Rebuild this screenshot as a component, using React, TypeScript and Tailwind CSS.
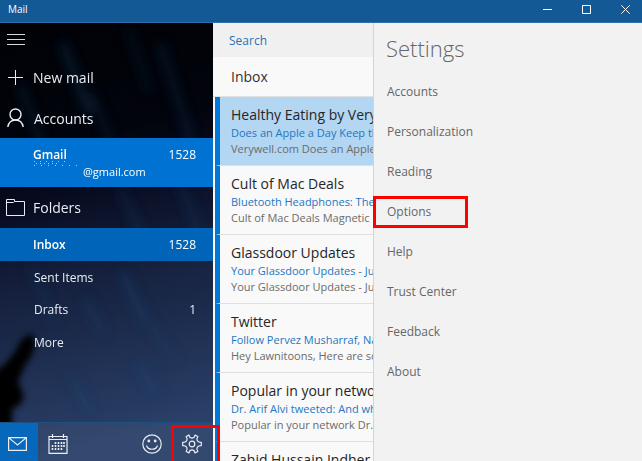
import React from "react";

const messages = [
  { from: "Healthy Eating by Very", subject: "Does an Apple a Day Keep th", preview: "Verywell.com Does an Apple", selected: true },
  { from: "Cult of Mac Deals", subject: "Bluetooth Headphones: The S", preview: "Cult of Mac Deals Magnetic E" },
  { from: "Glassdoor Updates", subject: "Your Glassdoor Updates - Jul", preview: "Your Glassdoor Updates - Jul" },
  { from: "Twitter", subject: "Follow Pervez Musharraf, Naja", preview: "Hey Lawnitoons, Here are som" },
  { from: "Popular in your netwo", subject: "Dr. Arif Alvi tweeted: And why", preview: "Popular in your network Dr. A" },
  { from: "Zahid Hussain Indher", subject: "", preview: "" },
];

const settings = ["Accounts", "Personalization", "Reading", "Options", "Help", "Trust Center", "Feedback", "About"];

const streaks = [
  [62, 20, 90, 90, 0.35], [20, 60, 44, 130, 0.2], [128, 5, 150, 70, 0.15], [160, 20, 192, 120, 0.25],
  [90, 70, 112, 120, 0.2], [120, 165, 150, 230, 0.2], [180, 160, 200, 210, 0.2],
  [122, 250, 146, 300, 0.35], [84, 275, 104, 310, 0.2], [150, 300, 175, 340, 0.15],
  [138, 340, 156, 370, 0.3], [70, 350, 90, 390, 0.15], [30, 240, 54, 300, 0.15],
];

function NightSky() {
  return (
    <svg className="absolute inset-0 h-full w-full" viewBox="0 0 213 438" preserveAspectRatio="none" aria-hidden="true">
      <defs>
        <linearGradient id="night" x1="0" y1="0" x2="0.12" y2="1">
          <stop offset="0" stopColor="#010206" />
          <stop offset="0.3" stopColor="#02040c" />
          <stop offset="0.42" stopColor="#070b1f" />
          <stop offset="0.58" stopColor="#131d39" />
          <stop offset="0.75" stopColor="#1c2b4c" />
          <stop offset="1" stopColor="#2a4068" />
        </linearGradient>
        <filter id="soft" x="-100%" y="-50%" width="300%" height="200%">
          <feGaussianBlur stdDeviation="6" />
        </filter>
        <filter id="edge" x="-50%" y="-50%" width="200%" height="200%">
          <feGaussianBlur stdDeviation="3" />
        </filter>
      </defs>
      <rect width="213" height="438" fill="url(#night)" />
      <g stroke="#234a7c" strokeWidth="8" filter="url(#soft)">
        {streaks.map(([x1, y1, x2, y2, o], i) => (
          <line key={i} x1={x1} y1={y1} x2={x2} y2={y2} opacity={o} />
        ))}
      </g>
      <path d="M-8 350 L4 342 L14 330 L22 316 L32 310 L35 320 L32 332 L25 342 L22 350 L18 358 L24 374 L20 382 L12 386 L12 404 L-8 410 Z" fill="#010205" filter="url(#edge)" />
    </svg>
  );
}

const line = { fill: "none", stroke: "#e9edf2", strokeWidth: 1.2 } as const;

function GearIcon() {
  return (
    <svg width="20" height="20" viewBox="0 0 20 20" {...line} strokeLinejoin="round" aria-hidden="true">
      <path d="M7 1 C7.300 3.400 8.200 4.200 10 4.200 S12.700 3.400 13 1 L15.800 2.600 C14.500 4.600 14.600 5.700 15.400 6.900 S17 8.500 19.300 8.400 V11.600 C17 11.500 16.200 11.900 15.400 13.100 S14.500 15.400 15.800 17.400 L13 19 C12.700 16.600 11.800 15.800 10 15.800 S7.300 16.600 7 19 L4.200 17.400 C5.500 15.400 5.400 14.300 4.600 13.100 S3 11.500 .7 11.600 V8.400 C3 8.500 3.800 8.100 4.600 6.900 S5.500 4.600 4.200 2.600 Z" />
      <circle cx="10" cy="10" r="2.800" />
    </svg>
  );
}

function CalendarIcon() {
  return (
    <svg width="20" height="20" viewBox="0 0 20 20" aria-hidden="true">
      <path d="M1 2.500 H19 V19.400 H1 Z M1 5.500 H19 M4.500 0 V4 M15.500 0 V4" {...line} />
      <g fill="#e9edf2">
        {[8, 11, 14].map((y) =>
          [4, 7, 10, 13, 15.5].map((x) =>
            (y === 8 && x === 4) || (y === 14 && x === 15.5) ? null : <rect key={`${x}-${y}`} x={x - 0.3} y={y} width="1.6" height="2" />
          )
        )}
      </g>
    </svg>
  );
}

export default function App() {
  return (
    <div className="flex h-screen flex-col overflow-hidden bg-[#f2f2f2] [font-family:'Open_Sans','Noto_Sans',sans-serif]">
      <header className="flex h-[23px] shrink-0 items-start justify-between border-b border-[#2f6ea8] bg-[#135995] pl-2 text-white">
        <h1 className="text-[10px] leading-[18px]">Mail</h1>
        <div className="flex h-[18px] gap-[5px]">
          <button aria-label="Minimize" className="flex w-[34px] items-center justify-center">
            <svg width="9" height="9" viewBox="0 0 9 9" stroke="#fff"><path d="M0 4.500 H9" /></svg>
          </button>
          <button aria-label="Maximize" className="flex w-[34px] items-center justify-center">
            <svg width="9" height="9" viewBox="0 0 9 9" stroke="#fff" fill="none"><path d="M.5 .5 H8.500 V8.500 H.5 Z" /></svg>
          </button>
          <button aria-label="Close" className="flex w-[34px] items-center justify-center">
            <svg width="9" height="9" viewBox="0 0 9 9" stroke="#fff"><path d="M.3 .3 L8.700 8.700 M8.700 .3 L.3 8.700" /></svg>
          </button>
        </div>
      </header>

      <div className="flex min-h-0 flex-1">
        <nav className="relative z-10 flex w-[213px] shrink-0 flex-col bg-[#02050b] text-[#e9edf2]">
          <NightSky />
          <div className="relative flex min-h-0 flex-1 flex-col">
            <button aria-label="Menu" className="flex h-[33px] items-center pl-[7px]">
              <svg width="18" height="11" viewBox="0 0 18 11" stroke="#d5d8dc" aria-hidden="true"><path d="M0 .5 H18 M0 5.500 H18 M0 10.500 H18" /></svg>
            </button>
            <button className="flex h-[42px] items-center gap-[10px] pl-2 text-[14px]">
              <svg width="15" height="15" viewBox="0 0 15 15" stroke="#e9edf2" aria-hidden="true"><path d="M0 7.500 H15 M7.500 0 V15" /></svg>
              New mail
            </button>
            <button className="flex h-10 items-center gap-[10px] pl-[7px] text-[14px]">
              <svg width="17" height="20" viewBox="0 0 17 20" {...line} strokeWidth="1.4" aria-hidden="true">
                <circle cx="8.5" cy="6.5" r="5.5" />
                <path d="M.8 19 C1.600 14.500 4.600 12 8.500 12 S15.400 14.500 16.200 19" />
              </svg>
              Accounts
            </button>
            <button className="flex h-[49px] flex-col bg-[#0073d2] pt-2 pr-[17px] pl-[33px] text-left text-white">
              <span className="flex w-full justify-between text-[12px] leading-[18px]">
                <b className="font-semibold">Gmail</b>
                <span>1528</span>
              </span>
              <span className="relative pl-[50px] text-[11px] leading-4">
                <svg className="absolute -top-1 left-0" width="48" height="6" viewBox="0 0 48 6" stroke="#cfe5f8" strokeWidth="1" opacity=".8" aria-hidden="true">
                  <path d="M1 1.500 H32" strokeDasharray="1 5" />
                  <path d="M3 3.500 H26" strokeDasharray="1 3" />
                  <path d="M1 5.500 H46" strokeDasharray="1 6" />
                </svg>
                @gmail.com
              </span>
            </button>
            <button className="flex h-[41px] items-center gap-2 pl-[6px] text-[14px]">
              <svg width="19" height="17" viewBox="0 0 19 17" {...line} strokeWidth="1" aria-hidden="true">
                <path d="M.5 .5 H8.500 V2.500 H18.500 V16.500 H.5 Z M.5 3.500 H7.500 L8.500 2.500" />
              </svg>
              Folders
            </button>
            <button className="flex h-[33px] items-center justify-between bg-[#0065b8] pr-[17px] pl-[33px] text-[12px] text-white">
              <b className="font-semibold">Inbox</b>
              <span>1528</span>
            </button>
            <button className="flex h-[33px] items-center pl-[34px] text-[12px]">Sent Items</button>
            <button className="flex h-8 items-center justify-between pr-[17px] pl-[34px] text-[12px]">
              <span>Drafts</span>
              <span>1</span>
            </button>
            <button className="flex h-[33px] items-center pl-[34px] text-[12px]">More</button>
          </div>
          <div className="relative flex h-[39px] shrink-0 border-t border-[#1f4f82] bg-white/5">
            <button aria-label="Mail" className="flex w-[38px] items-center justify-center bg-[#0768bb] pt-[3px] pr-[3px]">
              <svg width="19" height="14" viewBox="0 0 19 14" {...line} aria-hidden="true"><path d="M.6 .6 H18.400 V13.400 H.6 Z L9.500 8 L18.400 .6" /></svg>
            </button>
            <button aria-label="Calendar" className="flex w-10 items-center justify-center pt-[3px]"><CalendarIcon /></button>
            <span className="flex-1" />
            <button aria-label="Feedback" className="flex w-[38px] items-center justify-center pt-[3px]">
              <svg width="20" height="20" viewBox="0 0 20 20" {...line} aria-hidden="true">
                <circle cx="10" cy="10" r="9.200" />
                <path d="M4.500 11.500 C6 16.500 14 16.500 15.500 11.500" />
                <circle cx="6.800" cy="7" r=".8" fill="#e9edf2" />
                <circle cx="13.200" cy="7" r=".8" fill="#e9edf2" />
              </svg>
            </button>
            <button aria-label="Settings" className="relative flex w-[42px] items-center justify-center pt-[3px]">
              <GearIcon />
              <span className="absolute top-[2px] -right-[7px] -bottom-1 left-0 border-3 border-[#fe0000]" />
            </button>
          </div>
        </nav>

        <main className="w-[160px] shrink-0 overflow-hidden bg-[#f9f9f9]">
          <input aria-label="Search" placeholder="Search" className="block h-[34px] w-full bg-[#f0f0f0] pl-4 text-[12px] text-[#2672b5] outline-none placeholder:text-[#2672b5]" />
          <h2 className="h-10 border-b border-[#e2e2e2] pl-[18px] text-[14px] leading-[40px] text-[#333]">Inbox</h2>
          <ul className="pl-[2px]">
            {messages.map((m) => (
              <li
                key={m.from}
                className={`h-[69px] border-b border-l-5 border-b-[#e0e0e0] border-l-[#0078d7] pt-[7px] pl-[11px] whitespace-nowrap ${m.selected ? "bg-[#b3d6f2]" : "bg-[#f9f9f9]"}`}
              >
                <h3 className="text-[14px] leading-[21px] text-[#262626]">{m.from}</h3>
                <p className="text-[11px] leading-4 text-[#2277c2]">{m.subject}</p>
                <p className="text-[11px] leading-4 text-[#6b6b6b]">{m.preview}</p>
              </li>
            ))}
          </ul>
        </main>

        <aside className="min-w-0 flex-1 border-l border-[#d4d4d4] bg-[#f2f2f2] pt-2 text-[#666]">
          <h2 className="h-[41px] pl-3 text-[22px] leading-[34px] font-light">Settings</h2>
          <ul>
            {settings.map((s) => (
              <li key={s} className="flex h-10 items-center">
                <button
                  className={
                    s === "Options"
                      ? "-ml-px h-8 w-[95px] border-3 border-[#fe0000] pl-[11px] text-left text-[12px]"
                      : "h-8 pl-[13px] text-left text-[12px]"
                  }
                >
                  {s}
                </button>
              </li>
            ))}
          </ul>
        </aside>
      </div>
    </div>
  );
}
